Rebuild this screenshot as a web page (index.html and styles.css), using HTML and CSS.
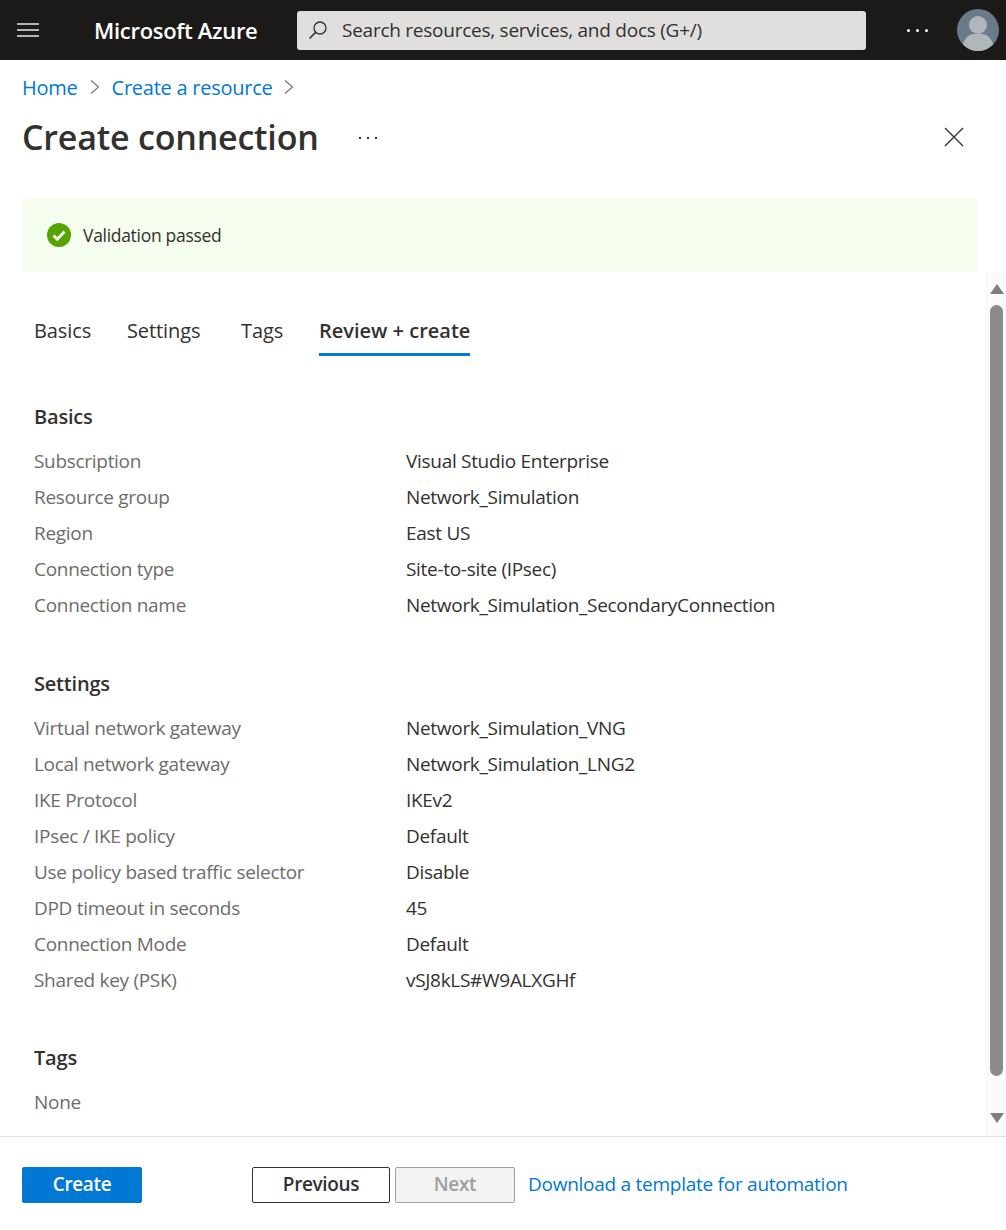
FILE: index.html
```html
<!DOCTYPE html>
<html lang="en">
<head>
  <meta charset="UTF-8">
  <meta name="viewport" content="width=device-width, initial-scale=1.0">
  <title>Create connection - Microsoft Azure</title>
  <link rel="stylesheet" href="styles.css">
</head>
<body>
  <!-- Top bar -->
  <header class="topbar">
    <button class="menu-btn" aria-label="Menu">
      <svg width="22" height="16" viewBox="0 0 22 16"><path d="M0 2h22M0 8h22M0 14h22" stroke="#e6e6e6" stroke-width="1.4" fill="none"/></svg>
    </button>
    <div class="brand">Microsoft Azure</div>
    <div class="search">
      <svg width="20" height="20" viewBox="0 0 20 20"><circle cx="12" cy="8" r="6" fill="none" stroke="#323130" stroke-width="1.3"/><path d="M7.6 12.4L1.5 18.5" stroke="#323130" stroke-width="1.5" fill="none"/></svg>
      <span>Search resources, services, and docs (G+/)</span>
    </div>
    <div class="more-dots"><i></i><i></i><i></i></div>
    <svg class="avatar" width="42" height="42" viewBox="0 0 42 42">
      <defs><clipPath id="avatar-clip"><circle cx="21" cy="21" r="21"/></clipPath></defs>
      <circle cx="21" cy="21" r="21" fill="#6b7a89"/>
      <g clip-path="url(#avatar-clip)">
        <circle cx="21" cy="16" r="9" fill="#b1b6bb"/>
        <path d="M5 42c0-11 6-17 12-17h8c6 0 12 6 12 17z" fill="#b1b6bb"/>
      </g>
    </svg>
  </header>

  <main class="blade">
    <nav class="crumbs">
      <a href="#">Home</a>
      <svg width="10" height="16" viewBox="0 0 10 16"><path d="M1 1.500L8.500 8 1 14.500" fill="none" stroke="#6f6e6d" stroke-width="1.100"/></svg>
      <a href="#">Create a resource</a>
      <svg width="10" height="16" viewBox="0 0 10 16"><path d="M1 1.500L8.500 8 1 14.500" fill="none" stroke="#6f6e6d" stroke-width="1.100"/></svg>
    </nav>

    <div class="title-row">
      <h1>Create connection</h1>
      <div class="title-more"><i></i><i></i><i></i></div>
      <svg class="close" width="20" height="20" viewBox="0 0 20 20"><path d="M1 1l18 18M19 1L1 19" stroke="#323130" stroke-width="1.300" fill="none"/></svg>
    </div>

    <div class="banner">
      <svg width="24" height="24" viewBox="0 0 24 24"><circle cx="12" cy="12" r="12" fill="#57a300"/><path d="M6.500 12.500l3.800 3.800 7.300-7.800" fill="none" stroke="#fff" stroke-width="2.800"/></svg>
      <span>Validation passed</span>
    </div>

    <div class="scroll-area">
      <div class="content">
        <div class="tabs">
          <span class="tab">Basics</span>
          <span class="tab">Settings</span>
          <span class="tab">Tags</span>
          <span class="tab active">Review + create</span>
        </div>

        <section class="group">
          <h2>Basics</h2>
          <div class="row"><span class="key">Subscription</span><span>Visual Studio Enterprise</span></div>
          <div class="row"><span class="key">Resource group</span><span>Network_Simulation</span></div>
          <div class="row"><span class="key">Region</span><span>East US</span></div>
          <div class="row"><span class="key">Connection type</span><span>Site-to-site (IPsec)</span></div>
          <div class="row"><span class="key">Connection name</span><span>Network_Simulation_SecondaryConnection</span></div>
        </section>

        <section class="group group-settings">
          <h2>Settings</h2>
          <div class="row"><span class="key">Virtual network gateway</span><span>Network_Simulation_VNG</span></div>
          <div class="row"><span class="key">Local network gateway</span><span>Network_Simulation_LNG2</span></div>
          <div class="row"><span class="key">IKE Protocol</span><span>IKEv2</span></div>
          <div class="row"><span class="key">IPsec / IKE policy</span><span>Default</span></div>
          <div class="row"><span class="key">Use policy based traffic selector</span><span>Disable</span></div>
          <div class="row"><span class="key">DPD timeout in seconds</span><span>45</span></div>
          <div class="row"><span class="key">Connection Mode</span><span>Default</span></div>
          <div class="row"><span class="key">Shared key (PSK)</span><span>vSJ8kLS#W9ALXGHf</span></div>
        </section>

        <section class="group">
          <h2>Tags</h2>
          <div class="row"><span class="key">None</span></div>
        </section>
      </div>

      <div class="scrollbar">
        <div class="arrow-up"></div>
        <div class="thumb"></div>
        <div class="arrow-down"></div>
      </div>
    </div>

    <footer class="actions">
      <button class="btn primary">Create</button>
      <button class="btn secondary">Previous</button>
      <button class="btn disabled">Next</button>
      <a href="#" class="template-link">Download a template for automation</a>
    </footer>
  </main>
</body>
</html>
```

FILE: styles.css
```css
* {
  box-sizing: border-box;
}
html, body {
  margin: 0;
  height: 100%;
}
body {
  display: flex;
  flex-direction: column;
  height: 1230px;
  font-family: "Open Sans", "Liberation Sans", sans-serif;
  font-size: 19px;
  letter-spacing: -0.3px;
  color: #323130;
  background: #fff;
}
a {
  color: #0078d4;
  text-decoration: none;
}

/* top bar */
.topbar {
  display: flex;
  align-items: center;
  height: 60px;
  background: #1b1a19;
  flex-shrink: 0;
}
.menu-btn {
  display: flex;
  padding: 0;
  margin-left: 17px;
  background: none;
  border: 0;
}
.brand {
  margin-left: 55px;
  width: 203px;
  color: #fff;
  font-size: 22px;
  font-weight: 600;
  letter-spacing: -0.3px;
  white-space: nowrap;
}
.search {
  display: flex;
  align-items: center;
  gap: 14px;
  width: 569px;
  height: 39px;
  padding-left: 11px;
  background: #e0dfdd;
  border-radius: 3px;
  letter-spacing: -0.25px;
}
.more-dots {
  display: flex;
  gap: 6px;
  margin-left: 41px;
}
.more-dots i {
  width: 3px;
  height: 3px;
  border-radius: 50%;
  background: #fff;
}
.avatar {
  margin-left: 29px;
}

/* blade */
.blade {
  display: flex;
  flex-direction: column;
  flex: 1;
  min-height: 0;
}
.crumbs {
  display: flex;
  align-items: center;
  gap: 12px;
  height: 28px;
  margin: 13px 0 0 22px;
  font-size: 20px;
  letter-spacing: -0.25px;
}
.title-row {
  display: flex;
  align-items: center;
  height: 50px;
  margin: 11px 0 0 22px;
}
.title-row h1 {
  margin: 0;
  font-size: 34px;
  font-weight: 600;
  letter-spacing: -0.2px;
}
.title-more {
  display: flex;
  gap: 6px;
  margin: 2px 0 0 40px;
}
.title-more i {
  width: 2px;
  height: 2px;
  background: #323130;
}
.close {
  margin-left: auto;
  margin-right: 42px;
}
.banner {
  display: flex;
  align-items: center;
  gap: 12px;
  height: 74px;
  margin: 36px 29px 0 22px;
  padding-left: 25px;
  background: #f6ffef;
  font-size: 17.5px;
}

/* scrolling part */
.scroll-area {
  display: flex;
  flex: 1;
  min-height: 0;
}
.content {
  flex: 1;
  padding: 41px 0 0 34px;
  overflow: hidden;
}
.tabs {
  display: grid;
  grid-template-columns: 55px 76px 40px 151px;
  gap: 38px;
  height: 43px;
  font-size: 20px;
  letter-spacing: -0.1px;
  white-space: nowrap;
}
.tab {
  height: 43px;
  line-height: 36px;
}
.tab.active {
  font-weight: 600;
  letter-spacing: 0;
  border-bottom: 3px solid #0078d4;
}
.group {
  margin-bottom: 43px;
}
.group h2 {
  margin: 0 0 8px;
  height: 36px;
  line-height: 36px;
  font-size: 20px;
  font-weight: 600;
  letter-spacing: -0.2px;
}
.tabs + .group {
  margin-top: 43px;
}
.group-settings {
  margin-bottom: 42px;
}
.row {
  display: flex;
  height: 36px;
  line-height: 36px;
  white-space: nowrap;
}
.key {
  width: 372px;
  color: #6d6c6b;
}
.scrollbar {
  display: flex;
  flex-direction: column;
  align-items: center;
  width: 21px;
  padding-left: 2px;
  background: #fafafa;
}
.arrow-up {
  margin-top: 12px;
  border: 7.5px solid transparent;
  border-top: 0;
  border-bottom: 10px solid #7e7e7e;
}
.thumb {
  width: 13px;
  height: 771px;
  margin-top: 11px;
  background: #8b8b8b;
  border-radius: 7px;
}
.arrow-down {
  margin-top: 37px;
  border: 7.5px solid transparent;
  border-bottom: 0;
  border-top: 10px solid #7e7e7e;
}

/* footer */
.actions {
  display: flex;
  align-items: center;
  height: 94px;
  padding: 3px 0 0 22px;
  border-top: 1px solid #e1e1e1;
  flex-shrink: 0;
}
.btn {
  height: 36px;
  padding: 0 0 2px;
  font: inherit;
  font-size: 19px;
  font-weight: 600;
  letter-spacing: -0.35px;
  border-radius: 2px;
}
.primary {
  width: 120px;
  color: #fff;
  background: #0078d4;
  border: 1px solid #0078d4;
}
.secondary {
  width: 138px;
  margin-left: 110px;
  color: #323130;
  background: #fff;
  border: 1px solid #323130;
}
.disabled {
  width: 120px;
  margin-left: 5px;
  color: #a19f9d;
  background: #f3f2f1;
  border: 1px solid #a19f9d;
}
.template-link {
  margin: 0 0 2px 13px;
  letter-spacing: -0.26px;
}
```
